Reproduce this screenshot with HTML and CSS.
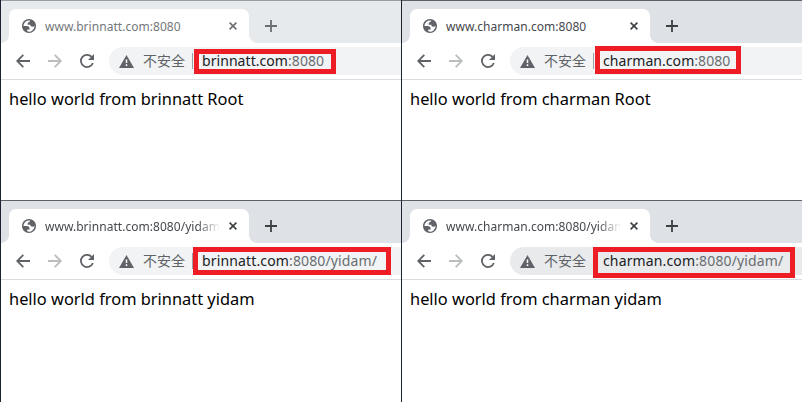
FILE: index.html
```
<!DOCTYPE html>
<html lang="zh-CN">
<head>
<meta charset="utf-8">
<title>Virtual hosts</title>
<link rel="stylesheet" href="styles.css">
</head>
<body>
<svg class="symbols" aria-hidden="true">
  <symbol id="globe" viewBox="2 2 20 20"><path fill="#5f6368" fill-rule="evenodd" d="M12 2C6.48 2 2 6.48 2 12s4.48 10 10 10 10-4.48 10-10S17.52 2 12 2zM4 12h4.4c3.407.022 4.922 1.73 4.543 5.127H9.488v2.47a8.004 8.004 0 0 0 10.498-8.083C19.327 12.504 18.332 13 17 13c-2.137 0-3.206-.916-3.206-2.75h-3.748c-.274-2.728.683-4.092 2.87-4.092 0-.975.327-1.597.811-1.97A8.004 8.004 0 0 0 4 12z"/></symbol>
  <symbol id="back" viewBox="0 0 14 14"><path d="M14 7H1.5M7.3 .9L1.2 7L7.3 13.1" fill="none" stroke="currentColor" stroke-width="1.8"/></symbol>
  <symbol id="reload" viewBox="0 0 14 14"><path d="M12.8 9A6.1 6.1 0 1 1 11.6 2.9" fill="none" stroke="currentColor" stroke-width="1.8"/><path d="M14 0V6H8Z" fill="currentColor"/></symbol>
  <symbol id="warning" viewBox="0 0 15 13"><path d="M7.5 0L15 13H0Z" fill="#5f6368"/><path d="M7.5 4.5V8M7.5 9.3V11" stroke="#fff" stroke-width="1.5"/></symbol>
  <symbol id="close" viewBox="0 0 8 8"><path d="M.6 .6L7.4 7.4M7.4 .6L.6 7.4" stroke="currentColor" stroke-width="1.6"/></symbol>
  <symbol id="plus" viewBox="0 0 12 12"><path d="M6 0V12M0 6H12" stroke="currentColor" stroke-width="1.8"/></symbol>
</svg>
<main class="grid">
  <section class="window inactive">
    <div class="strip">
      <div class="tab"><svg class="globe"><use href="#globe"/></svg><span class="title">www.brinnatt.com:8080</span><svg class="close"><use href="#close"/></svg></div>
      <svg class="plus"><use href="#plus"/></svg>
    </div>
    <div class="toolbar">
      <svg class="nav"><use href="#back"/></svg><svg class="nav forward"><use href="#back"/></svg><svg class="nav"><use href="#reload"/></svg>
      <div class="omnibox"><svg class="warning"><use href="#warning"/></svg><span class="unsafe">不安全</span><i class="sep"></i><span class="url">brinnatt.com<span class="rest">:8080</span></span></div>
      <div class="mark m1"></div>
    </div>
    <p class="content">hello world from brinnatt Root</p>
  </section>
  <section class="window">
    <div class="strip">
      <div class="tab"><svg class="globe"><use href="#globe"/></svg><span class="title">www.charman.com:8080</span><svg class="close"><use href="#close"/></svg></div>
      <svg class="plus"><use href="#plus"/></svg>
    </div>
    <div class="toolbar">
      <svg class="nav"><use href="#back"/></svg><svg class="nav forward"><use href="#back"/></svg><svg class="nav"><use href="#reload"/></svg>
      <div class="omnibox"><svg class="warning"><use href="#warning"/></svg><span class="unsafe">不安全</span><i class="sep"></i><span class="url">charman.com<span class="rest">:8080</span></span></div>
      <div class="mark m2"></div>
    </div>
    <p class="content">hello world from charman Root</p>
  </section>
  <section class="window">
    <div class="strip">
      <div class="tab"><svg class="globe"><use href="#globe"/></svg><span class="title fade">www.brinnatt.com:8080/yidam</span><svg class="close"><use href="#close"/></svg></div>
      <svg class="plus"><use href="#plus"/></svg>
    </div>
    <div class="toolbar">
      <svg class="nav"><use href="#back"/></svg><svg class="nav forward"><use href="#back"/></svg><svg class="nav"><use href="#reload"/></svg>
      <div class="omnibox"><svg class="warning"><use href="#warning"/></svg><span class="unsafe">不安全</span><i class="sep"></i><span class="url long">brinnatt.com<span class="rest">:8080/yidam/</span></span></div>
      <div class="mark m3"></div>
    </div>
    <p class="content">hello world from brinnatt yidam</p>
  </section>
  <section class="window hover">
    <div class="strip">
      <div class="tab"><svg class="globe"><use href="#globe"/></svg><span class="title fade">www.charman.com:8080/yidam</span><svg class="close"><use href="#close"/></svg></div>
      <svg class="plus"><use href="#plus"/></svg>
    </div>
    <div class="toolbar">
      <svg class="nav"><use href="#back"/></svg><svg class="nav forward"><use href="#back"/></svg><svg class="nav"><use href="#reload"/></svg>
      <div class="omnibox"><svg class="warning"><use href="#warning"/></svg><span class="unsafe">不安全</span><i class="sep"></i><span class="url long">charman.com<span class="rest">:8080/yidam/</span></span></div>
      <div class="mark m4"></div>
    </div>
    <p class="content">hello world from charman yidam</p>
  </section>
</main>
</body>
</html>
```
FILE: styles.css
```
* { box-sizing: border-box; }
body { margin: 0; background: #fff; font-family: "Noto Sans", "Noto Sans CJK SC", sans-serif; overflow: hidden; }
svg { display: block; flex: none; }
.symbols { display: none; }
.grid { display: grid; grid-template-columns: 401px 401px; grid-template-rows: 200px 202px; }
.window { border-left: 1px solid #1b2330; min-width: 0; background: #fff; }
.strip { height: 43px; border-top: 1px solid #5f6166; background: #dee1e6; padding: 8px 0 0 8px; display: flex; }
.inactive .strip { background: #e7eaed; border-top-color: #9b9da2; }
.tab { position: relative; width: 240px; height: 34px; background: #fff; border-radius: 7px 7px 0 0; display: flex; align-items: center; padding-left: 13px; }
.tab::before, .tab::after { content: ""; position: absolute; bottom: 0; width: 8px; height: 8px; }
.tab::before { left: -8px; background: radial-gradient(circle at 0 0, transparent 7.5px, #fff 8.2px); }
.tab::after { right: -8px; background: radial-gradient(circle at 100% 0, transparent 7.5px, #fff 8.2px); }
.globe { width: 14px; height: 14px; }
.title { width: 177px; margin-left: 9px; white-space: nowrap; font-size: 12px; line-height: 18px; letter-spacing: .04px; color: #45484c; position: relative; top: 1px; }
.inactive .title { color: #74777b; }
.fade { -webkit-mask-image: linear-gradient(90deg, #000 152px, transparent 175px); mask-image: linear-gradient(90deg, #000 152px, transparent 175px); }
.close { width: 8px; height: 8px; margin-left: 7px; color: #3c4043; }
.plus { width: 12px; height: 12px; margin: 11px 0 0 16px; color: #3c4043; }
.inactive .close, .inactive .plus { color: #6b6e72; }
.toolbar { position: relative; height: 37px; border-bottom: 1px solid #dadce0; display: flex; align-items: center; padding-left: 15px; color: #5f6368; }
.nav { width: 14px; height: 14px; margin-right: 18px; }
.forward { transform: scaleX(-1); color: #babcbe; }
.omnibox { height: 28px; flex: 1; margin-left: -3px; border-radius: 14px 0 0 14px; background: #f1f3f4; display: flex; align-items: center; padding-left: 10px; white-space: nowrap; }
.hover .omnibox { background: #e8eaec; }
.warning { width: 15px; height: 13px; }
.unsafe { width: 42px; margin: 0 0 2px 9px; font: 14px/20px "Noto Sans CJK SC", sans-serif; }
.sep { width: 1px; height: 16px; margin-left: 7px; background: #9aa0a6; }
.url { margin-left: 9px; font-size: 14px; line-height: 20px; letter-spacing: .06px; color: #202124; }
.long { letter-spacing: .14px; }
.rest { color: #6a6d72; }
.mark { position: absolute; border: 5px solid #ee1c25; }
.m1 { left: 193px; top: 6px; width: 142px; height: 25px; }
.m2 { left: 193px; top: 3px; width: 146px; height: 28px; }
.m3 { left: 192px; top: 4px; width: 198px; height: 28px; }
.m4 { left: 191px; top: 4px; width: 202px; height: 31px; }
.content { margin: 8px 0 0 8px; font-size: 16.4px; line-height: 22px; color: #000; white-space: nowrap; }
```
